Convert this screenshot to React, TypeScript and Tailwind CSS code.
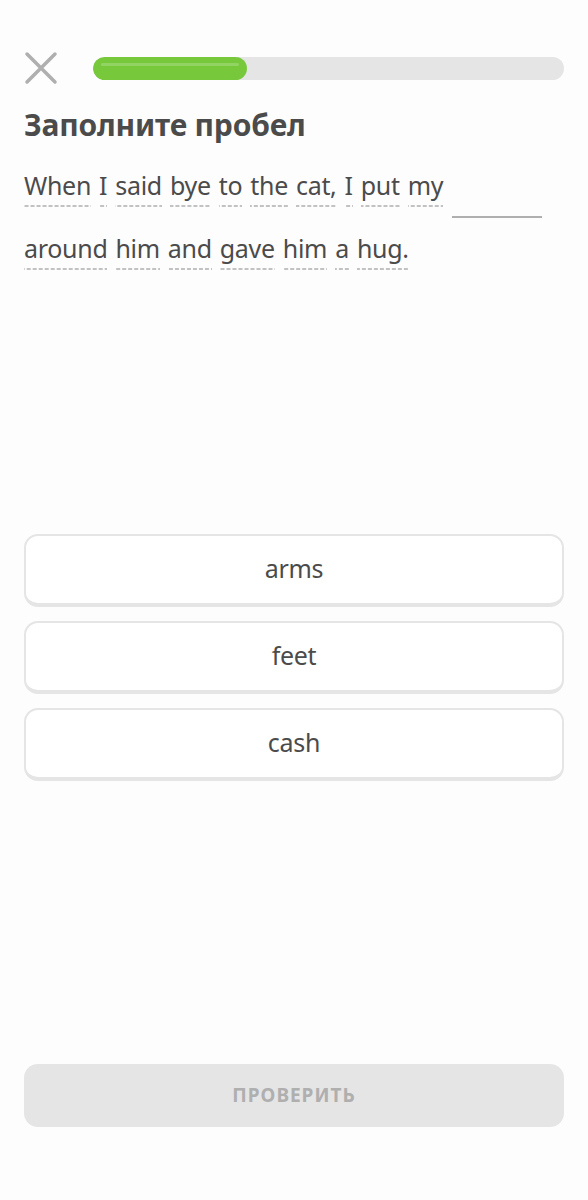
import React from "react";

const line1 = ["When", "I", "said", "bye", "to", "the", "cat,", "I", "put", "my"];
const line2 = ["around", "him", "and", "gave", "him", "a", "hug."];

function Word({ w }: { w: string }) {
  return (
    <span className="inline-block pb-[8px] leading-[28px] bg-[linear-gradient(to_right,#c2c2c2_60%,transparent_60%)] bg-size-[6px_2px] bg-repeat-x bg-bottom">
      {w}
    </span>
  );
}

function Option({ label }: { label: string }) {
  return (
    <button className="w-full h-[73px] rounded-[14px] border-2 border-b-4 border-[#e5e5e5] bg-white text-[25px] text-[#4b4b4b] flex items-center justify-center pb-[2px] tracking-[-0.3px]">
      {label}
    </button>
  );
}

export default function App() {
  return (
    <div
      className="w-[588px] h-[1200px] bg-[#fdfdfd] flex flex-col px-6 pt-[51px] pb-[73px] text-[#4b4b4b]"
      style={{ fontFamily: '"Noto Sans", "DejaVu Sans", sans-serif' }}
    >
      <div className="flex items-center gap-[35px] h-[34px]">
        <svg width="34" height="34" viewBox="0 0 34 34" className="shrink-0">
          <path d="M3 3 L31 31 M31 3 L3 31" stroke="#afafaf" strokeWidth="3.5" strokeLinecap="round" />
        </svg>
        <div className="flex-1 h-[23px] rounded-full bg-[#e5e5e5] relative overflow-hidden">
          <div className="h-full w-[154px] rounded-full bg-[#78c83c] relative">
            <div className="absolute left-[8px] right-[8px] top-[6px] h-[3px] rounded-full bg-[#92d463]" />
          </div>
        </div>
      </div>

      <h1 className="mt-[20px] text-[30px] font-bold leading-[40px] tracking-[-0.2px]">Заполните пробел</h1>

      <div className="mt-[26px] flex flex-col gap-y-[16px] text-[25px] tracking-[-0.3px]">
        <div className="flex items-start gap-x-[8px]">
          {line1.map((w, i) => (
            <Word key={i} w={w} />
          ))}
          <span className="inline-block w-[90px] h-[47px] ml-[1px] border-b-2 border-[#afafaf]" />
        </div>
        <div className="flex items-start gap-x-[8px]">
          {line2.map((w, i) => (
            <Word key={i} w={w} />
          ))}
        </div>
      </div>

      <div className="mt-[264px] flex flex-col gap-[14px]">
        <Option label="arms" />
        <Option label="feet" />
        <Option label="cash" />
      </div>

      <div className="flex-1" />

      <button className="w-full h-[63px] rounded-[14px] bg-[#e5e5e5] text-[#afafaf] text-[19px] font-bold tracking-[1px]">
        ПРОВЕРИТЬ
      </button>
    </div>
  );
}
